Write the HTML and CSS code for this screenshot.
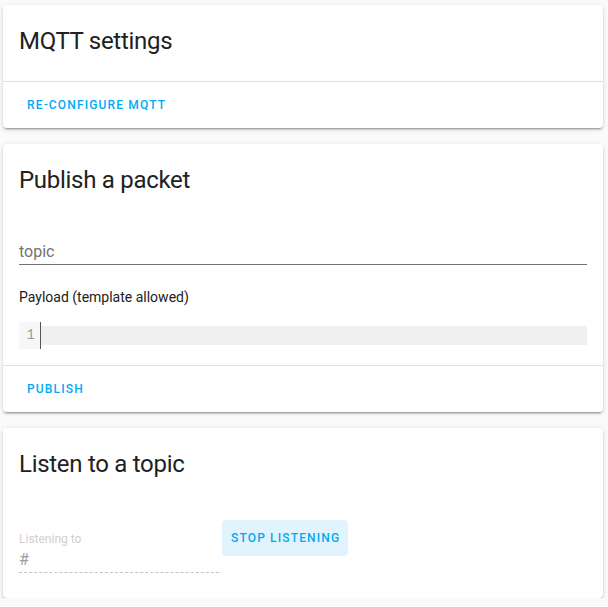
FILE: index.html
```
<!DOCTYPE html>
<html>
<head>
<meta charset="utf-8">
<link rel="stylesheet" href="styles.css">
</head>
<body>
<div class="content">
  <div class="card">
    <h1 class="card-header">MQTT settings</h1>
    <div class="card-actions">
      <span class="btn">Re-configure MQTT</span>
    </div>
  </div>

  <div class="card">
    <h1 class="card-header">Publish a packet</h1>
    <div class="card-content">
      <div class="field">
        <div class="input-line placeholder">topic</div>
      </div>
      <p class="payload-label">Payload (template allowed)</p>
      <div class="code-editor">
        <div class="gutter"><div class="line-no">1</div></div>
        <div class="code-area"><div class="active-line"></div></div>
      </div>
    </div>
    <div class="card-actions">
      <span class="btn">Publish</span>
    </div>
  </div>

  <div class="card">
    <h1 class="card-header">Listen to a topic</h1>
    <div class="card-content listen">
      <div class="field disabled">
        <div class="float-label">Listening to</div>
        <div class="input-line">#</div>
      </div>
      <span class="btn btn-tonal">Stop listening</span>
    </div>
  </div>
</div>
</body>
</html>
```
FILE: styles.css
```
html, body {
  margin: 0;
  padding: 0;
  background: #fafafa;
  font-family: Roboto, "Noto Sans", sans-serif;
  color: #212121;
}

.content {
  width: 600px;
  padding: 5px 0 0 3px;
  display: flex;
  flex-direction: column;
  gap: 16px;
}

.card {
  background: #fff;
  border-radius: 4px;
  box-shadow: 0 2px 2px 0 rgba(0,0,0,.14), 0 1px 5px 0 rgba(0,0,0,.12), 0 3px 1px -2px rgba(0,0,0,.2);
}

.card-header {
  margin: 0;
  font-size: 24px;
  font-weight: 400;
  line-height: 48px;
  letter-spacing: -0.012em;
  padding: 12px 16px 16px;
  color: #212121;
}

.card-actions {
  border-top: 1px solid rgba(0,0,0,.12);
  padding: 5px 16px;
  display: flex;
}

.btn {
  display: inline-block;
  height: 36px;
  line-height: 36px;
  padding: 0 8px;
  font-size: 12px;
  font-weight: 500;
  letter-spacing: 1.15px;
  text-transform: uppercase;
  color: #03a9f4;
  border-radius: 4px;
}

.btn-tonal {
  background: #e1f4fd;
  margin: 16px 0 0 3px;
  padding: 0 8px 0 9px;
}

.card-content {
  padding: 0 16px 16px;
}

.field {
  padding: 20px 0 8px;
}

.input-line {
  font-size: 16px;
  line-height: 24px;
  height: 24px;
  border-bottom: 1px solid #737373;
}

.placeholder {
  color: #737373;
}

.payload-label {
  margin: 14px 0 15px;
  font-size: 14px;
  line-height: 20px;
  color: #212121;
}

.code-editor {
  display: flex;
  height: 27px;
}

.gutter {
  width: 21px;
  background: #f7f7f7;
  padding-top: 4px;
}

.line-no {
  height: 19px;
  line-height: 19px;
  font-family: "Liberation Mono", monospace;
  font-size: 14px;
  color: #999;
  text-align: right;
  padding-right: 5px;
}

.code-area {
  flex: 1;
  border-left: 1px solid #555;
  padding-top: 4px;
}

.active-line {
  height: 19px;
  background: #f0f0f0;
}

.listen {
  display: flex;
  align-items: flex-start;
}

.field.disabled {
  width: 200px;
  padding: 26px 0 9px;
}

.float-label {
  font-size: 12px;
  line-height: 18px;
  color: #cfcfcf;
}

.disabled .input-line {
  color: #9e9e9e;
  border-bottom: 1px dashed #c4c4c4;
}
```
